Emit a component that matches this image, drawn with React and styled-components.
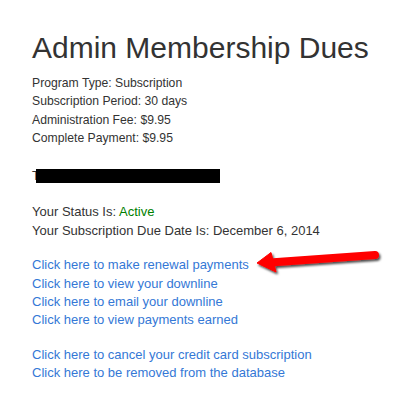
import styled, { createGlobalStyle } from "styled-components";

const GlobalStyle = createGlobalStyle`
  body {
    margin: 0;
    background: #fff;
    font-family: "Liberation Sans", Arial, sans-serif;
    color: #333;
  }
`;

const Page = styled.div`
  position: relative;
  width: 410px;
  height: 409px;
  padding: 31px 0 0 32px;
  box-sizing: border-box;
`;

const Title = styled.h1`
  margin: 0 0 10px;
  font-size: 30px;
  font-weight: 400;
  line-height: 33px;
  color: #333;
`;

const Block = styled.div`
  font-size: ${(p) => (p.$small ? "12.2px" : "13px")};
  line-height: ${(p) => (p.$tall ? "23.8px" : "18.4px")};
  margin-bottom: 16px;
`;

const Line = styled.div`
  white-space: nowrap;
`;

const Status = styled.span`
  color: #008000;
`;

const Link = styled.a`
  display: block;
  color: #3478d6;
  text-decoration: none;
  white-space: nowrap;
`;

const Redacted = styled.span`
  display: inline-block;
  width: 184px;
  height: 14px;
  margin-left: -4px;
  background: #000;
  vertical-align: -3px;
`;

const Arrow = styled.svg`
  position: absolute;
  left: 250px;
  top: 240px;
  width: 140px;
  height: 40px;
  overflow: visible;
`;

export default function App() {
  return (
    <>
      <GlobalStyle />
      <Page>
        <Title>Admin Membership Dues</Title>

        <Block $small>
          <Line>Program Type: Subscription</Line>
          <Line>Subscription Period: 30 days</Line>
          <Line>Administration Fee: $9.95</Line>
          <Line>Complete Payment: $9.95</Line>
        </Block>

        <Block $tall>
          <Line>
            T<Redacted />
          </Line>
        </Block>

        <Block>
          <Line>
            Your Status Is: <Status>Active</Status>
          </Line>
          <Line>Your Subscription Due Date Is: December 6, 2014</Line>
        </Block>

        <Block>
          <Link href="#">Click here to make renewal payments</Link>
          <Link href="#">Click here to view your downline</Link>
          <Link href="#">Click here to email your downline</Link>
          <Link href="#">Click here to view payments earned</Link>
        </Block>

        <Block>
          <Link href="#">Click here to cancel your credit card subscription</Link>
          <Link href="#">Click here to be removed from the database</Link>
        </Block>

        <Arrow viewBox="250 240 140 40">
          <defs>
            <filter id="arrowShadow" x="-20%" y="-50%" width="140%" height="200%">
              <feDropShadow dx="1.5" dy="2" stdDeviation="1.2" floodColor="#000" floodOpacity="0.7" />
            </filter>
          </defs>
          <g filter="url(#arrowShadow)" fill="#ff0000" stroke="#ff0000">
            <line x1="270" y1="262.5" x2="375" y2="255" strokeWidth="8" strokeLinecap="round" />
            <polygon points="257,263 271,252.5 276,272" strokeWidth="1" strokeLinejoin="round" />
          </g>
        </Arrow>
      </Page>
    </>
  );
}
